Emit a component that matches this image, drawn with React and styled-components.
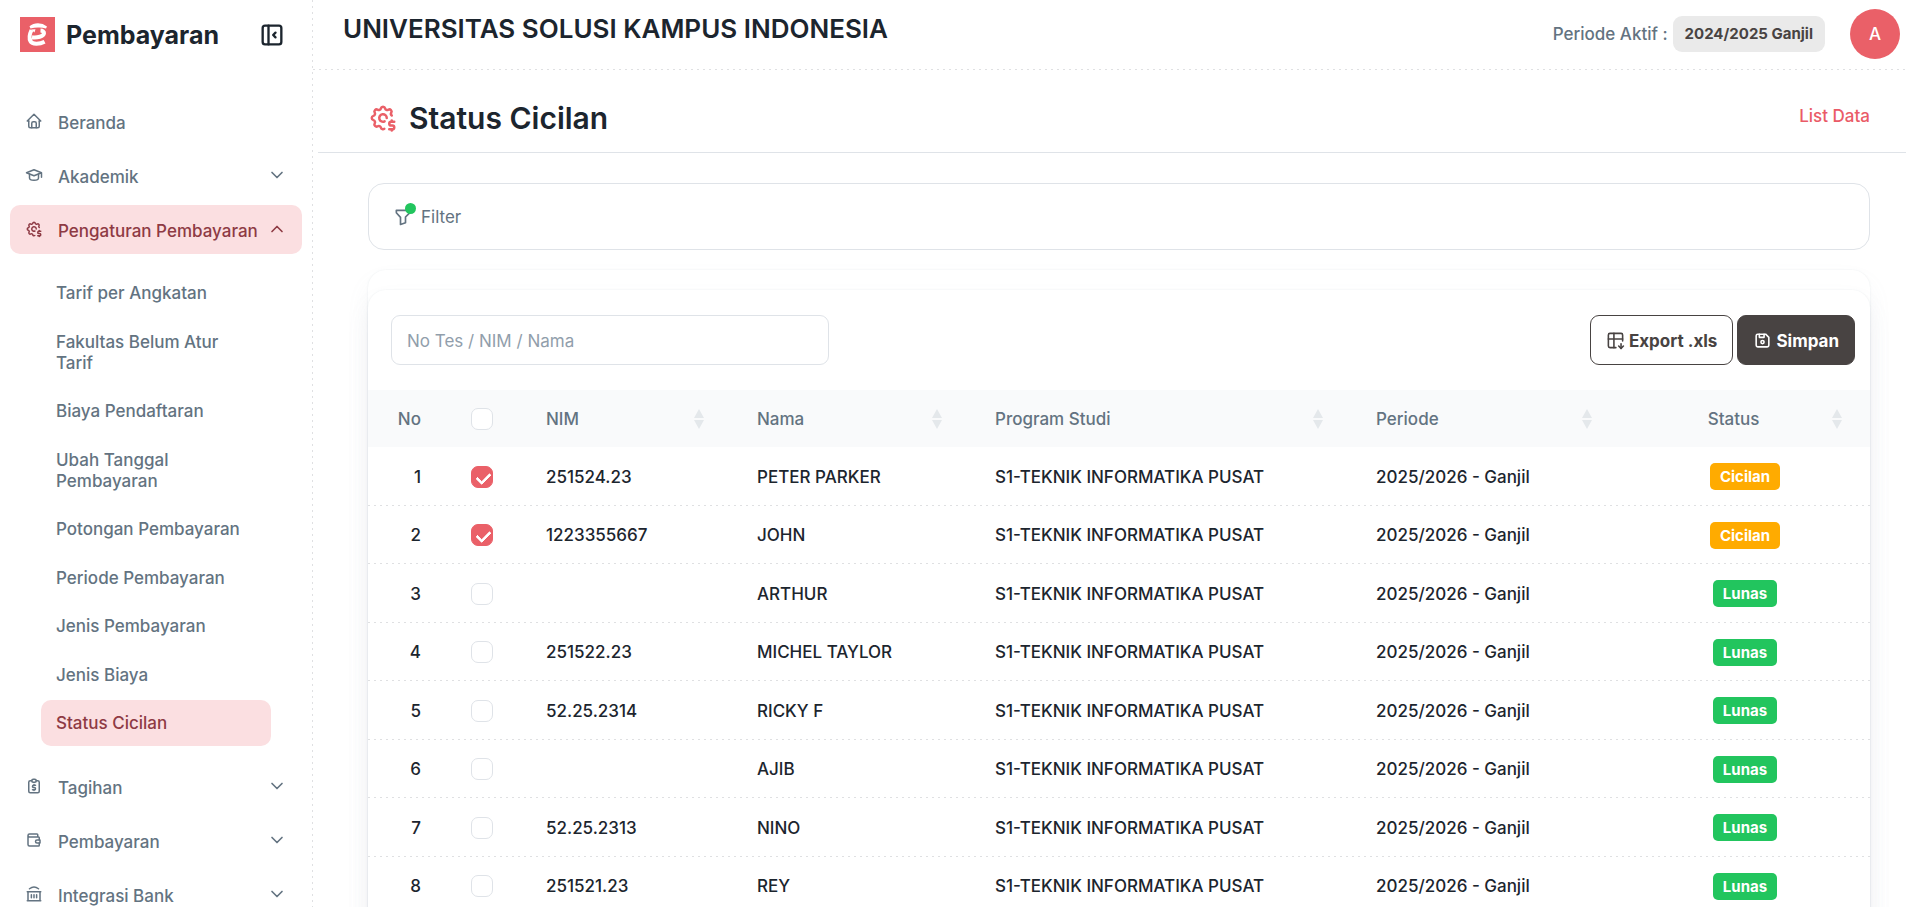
import { useState } from 'react';
import styled, { createGlobalStyle } from 'styled-components'
import {
  TbHome, TbSchool, TbSettingsDollar, TbWallet,
  TbLayoutSidebarLeftCollapse, TbFilter, TbTableDown, TbDeviceFloppy, TbChevronDown, TbChevronUp,
} from 'react-icons/tb'



const GlobalStyle = createGlobalStyle`
  * {
    box-sizing: border-box;
  }
  body {
    margin: 0;
    background: #ffffff;
    color: #1c252e;
    font-family: Inter, "Liberation Sans", sans-serif;
    font-size: 17px;
    font-weight: 500;
    overflow: hidden;
  }
  button, input {
    font-family: inherit;
    font-size: inherit;
  }
`;
const Page = styled.div`
  display: flex;
  flex-direction: row;
  height: 100vh;
`;
const Sidebar = styled.aside`
  width: 313px;
  flex-shrink: 0;
  padding: 0 11px 0 10px;
  background: repeating-linear-gradient(#dfe0e2 0 2px, transparent 2px 6px) right / 1px 100% no-repeat;
  overflow: hidden;
`;
const Brand = styled.div`
  display: flex;
  align-items: center;
  gap: 11px;
  height: 69px;
  padding: 0 16px 0 10px;
  margin-bottom: 28px;
  & h2 {
    margin: 0;
    flex: 1;
    font-size: 25px;
    font-weight: 700;
  }
`;
const IconButton = styled.button`
  display: flex;
  padding: 0;
  border: none;
  background: none;
  color: #1c252e;
  cursor: pointer;
  & svg {
    width: 28px;
    height: 28px;
  }
`;
const Menu = styled.ul`
  display: flex;
  flex-direction: column;
  gap: 5px;
  margin: 0;
  padding: 0;
  list-style: none;
`;
const MenuLink = styled.a`
  display: flex;
  align-items: center;
  height: 49px;
  padding: 2px 15px 0;
  border-radius: 10px;
  text-decoration: none;
  white-space: nowrap;
  color: ${(props) => (props.$active ? "#8e3a44" : "#637381")};
  background: ${(props) => (props.$active ? "#fbdfe1" : "transparent")};
  & span {
    flex: 1;
    margin-left: 15px;
  }
`;
const MenuIcon = styled.svg`
  width: 18px;
  height: 18px;
  flex-shrink: 0;
  margin-bottom: 4px;
`;
const Arrow = styled.svg`
  width: 20px;
  height: 20px;
  flex-shrink: 0;
  margin-bottom: 4px;
`;
const SubMenu = styled.ul`
  margin: 0;
  padding: 16px 31px 8px;
  list-style: none;
  & li {
    margin-bottom: 2px;
  }
  & li:nth-child(odd) {
    margin-bottom: 3px;
  }
`;
const SubLink = styled.a`
  display: block;
  padding: 13px 15px 12px;
  border-radius: 10px;
  line-height: 21px;
  text-decoration: none;
  color: ${(props) => (props.$active ? "#8e3a44" : "#637381")};
  background: ${(props) => (props.$active ? "#fbdfe1" : "transparent")};
`;

const Main = styled.div`
  flex: 1;
  min-width: 0;
`;
const TopBar = styled.header`
  display: flex;
  justify-content: space-between;
  height: 70px;
  padding: 0 6px 0 30px;
  background: repeating-linear-gradient(90deg, #dfe0e2 0 2px, transparent 2px 6px) bottom / 100% 1px no-repeat;
  & h1 {
    margin: 12px 0 0;
    font-size: 26px;
    line-height: 34px;
    font-weight: 600;
  }
`;
const TopRight = styled.div`
  display: flex;
  align-items: center;
  padding-bottom: 2px;
  color: #637381;
`;
const PeriodTag = styled.span`
  margin-left: 5px;
  padding: 0 12px;
  line-height: 36px;
  border-radius: 9px;
  background: #eaeaea;
  color: #484342;
  font-size: 15px;
  font-weight: 700;
`;
const Avatar = styled.button`
  width: 50px;
  height: 50px;
  margin-left: 25px;
  padding: 0;
  border: none;
  border-radius: 50%;
  background: #ea6068;
  color: #ffffff;
  font-weight: 500;
`;
const PageHead = styled.div`
  display: flex;
  align-items: center;
  height: 83px;
  margin-left: 5px;
  padding: 14px 36px 0 50px;
  border-bottom: 1px solid #dfe3e8;
  & svg {
    width: 30px;
    height: 30px;
    color: #ea6068;
  }
  & h2 {
    margin: 0 0 0 11px;
    flex: 1;
    font-size: 30px;
    font-weight: 600;
  }
  & a {
    padding-bottom: 4px;
    color: #ea5b67;
    text-decoration: none;
  }
`;
const Content = styled.main`
  padding: 30px 36px 0 55px;
`;
const FilterBox = styled.div`
  display: flex;
  align-items: center;
  height: 67px;
  padding: 0 24px;
  margin-bottom: 20px;
  border: 1px solid #dfe3e8;
  border-radius: 16px;
`;
const FilterButton = styled.button`
  position: relative;
  display: flex;
  align-items: center;
  gap: 8px;
  padding: 0;
  border: none;
  background: none;
  color: #637381;
  cursor: pointer;
  & svg {
    width: 20px;
    height: 20px;
  }
`;
const Dot = styled.i`
  position: absolute;
  top: -4px;
  left: 12px;
  width: 11px;
  height: 11px;
  border-radius: 50%;
  background: #22c55e;
`;
const Card = styled.section`
  background: #ffffff;
  border-radius: 18px;
  box-shadow: 0 0 2px rgba(145, 158, 171, 0.2), 0 13px 26px -4px rgba(145, 158, 171, 0.12);
`;
const OuterCard = styled(Card)`
  padding-top: 20px;
`;
const TableCard = styled(Card)`
  padding-bottom: 60px;
`;
const Toolbar = styled.div`
  display: flex;
  align-items: center;
  gap: 4px;
  padding: 25px 15px 25px 23px;
`;
const Search = styled.input`
  width: 438px;
  height: 50px;
  margin-right: auto;
  padding: 2px 15px 0;
  border: 1px solid #dfe3e8;
  border-radius: 9px;
  outline: none;
  color: #1c252e;
  &::placeholder {
    color: #919eab;
  }
`;
const ActionButton = styled.button`
  display: flex;
  align-items: center;
  gap: 4px;
  height: 50px;
  padding: 2px 15px 0;
  border: 1px solid #484342;
  border-radius: 9px;
  font-weight: 700;
  cursor: pointer;
  color: ${(props) => (props.$solid ? "#ffffff" : "#484342")};
  background: ${(props) => (props.$solid ? "#484342" : "#ffffff")};
  & svg {
    width: 19px;
    height: 19px;
    margin-bottom: 2px;
  }
`;
const Table = styled.table`
  width: 100%;
  table-layout: fixed;
  border-collapse: separate;
  border-spacing: 0;
  & thead tr {
    height: 57px;
    background: #f9fafb;
  }
  & tbody tr {
    height: 58px;
    background: repeating-linear-gradient(90deg, #dfe0e2 0 2px, transparent 2px 6px) bottom / 100% 1px no-repeat;
  }
  & tbody tr:nth-child(odd) {
    height: 59px;
  }
`;
const Col = styled.col`
  width: ${(props) => props.$width}px;
`;
const Th = styled.th`
  padding: 0 25px;
  font-weight: 500;
  color: #637381;
  text-align: ${(props) => props.$align || "left"};
`;
const ThInner = styled.div`
  display: flex;
  align-items: center;
  gap: 10px;
  margin-right: 3px;
  & span {
    flex: 1;
  }
`;
const Td = styled.td`
  padding: 0 25px;
  white-space: nowrap;
  text-align: ${(props) => props.$align || "left"};
`;
const SortIcon = styled.svg`
  width: 10px;
  height: 20px;
  fill: #e4e8eb;
`;
const CheckBox = styled.input`
  appearance: none;
  display: block;
  position: relative;
  width: 22px;
  height: 22px;
  margin: 0;
  border: 1px solid #dfe3e8;
  border-radius: 7px;
  background: #ffffff;
  cursor: pointer;
  &:checked {
    border-color: #ea6068;
    background: #ea6068;
  }
  &:checked::after {
    content: "";
    position: absolute;
    left: 7px;
    top: 3px;
    width: 6px;
    height: 11px;
    border: solid #ffffff;
    border-width: 0 3px 3px 0;
    border-radius: 1px;
    transform: rotate(45deg);
  }
`;
const StatusBadge = styled.span`
  display: inline-block;
  padding: 0 10px;
  border-radius: 5px;
  line-height: 27px;
  font-size: 15px;
  font-weight: 700;
  color: #ffffff;
  background: ${(props) => (props.$status === "Lunas" ? "#22c55e" : "#ffab00")};
`;

const Logo = () => (
  <svg width="35" height="35" viewBox="0 0 35 35" aria-hidden="true">
    <rect width="35" height="35" fill="#ea6068" />
    <path d="M9.500 9.200Q13 6.200 18 6.200T27 9.400L26 11.600Q22 10.400 18 10.600T10.500 11.400z" fill="#fff" />
    <path
      d="M11.500 13C9.600 17 9 21.500 10.500 24.300 12.200 27.600 19.500 27.400 24.600 24.800M12 20.300C17 21 23.800 19.500 24 16.200 24.100 14.600 22.500 13.600 20.500 13.500"
      fill="none" stroke="#fff" strokeWidth="4" strokeLinejoin="round"
    />
    <path d="M11 12.500 15.500 12.300 14.500 15.500z" fill="#fff" />
  </svg>
)

const LineIcon = ({ children, ...rest }) => (
  <svg viewBox="0 0 24 24" fill="none" stroke="currentColor" strokeWidth="2" strokeLinecap="round" strokeLinejoin="round" {...rest}>
    {children}
  </svg>
)

const InvoiceIcon = (props) => (
  <LineIcon {...props}>
    <path d="M9 5H7a2 2 0 0 0-2 2v12a2 2 0 0 0 2 2h10a2 2 0 0 0 2-2V7a2 2 0 0 0-2-2h-2" />
    <path d="M9 5a2 2 0 0 1 2-2h2a2 2 0 0 1 2 2 2 2 0 0 1-2 2h-2a2 2 0 0 1-2-2z" />
    <path d="M14 11h-2.500a1.500 1.500 0 0 0 0 3h1a1.500 1.500 0 0 1 0 3H10M12 10v1M12 17v1" />
  </LineIcon>
)

const BankIcon = (props) => (
  <LineIcon {...props}>
    <path d="M3 21h18M3 9h18M4 9v12M20 9v12M8.500 13v4M12 13v4M15.500 13v4M6 5c4-3 8-3 12 0" />
  </LineIcon>
)

const menus = [
  { label: 'Beranda', icon: TbHome },
  { label: 'Akademik', icon: TbSchool, hasChild: true },
  {
    label: 'Pengaturan Pembayaran',
    icon: TbSettingsDollar,
    hasChild: true,
    active: true,
    items: [
      'Tarif per Angkatan', 'Fakultas Belum Atur Tarif', 'Biaya Pendaftaran', 'Ubah Tanggal Pembayaran',
      'Potongan Pembayaran', 'Periode Pembayaran', 'Jenis Pembayaran', 'Jenis Biaya', 'Status Cicilan',
    ],
  },
  { label: 'Tagihan', icon: InvoiceIcon, hasChild: true },
  { label: 'Pembayaran', icon: TbWallet, hasChild: true },
  { label: 'Integrasi Bank', icon: BankIcon, hasChild: true },
]

const students = [
  { nim: '251524.23', nama: 'PETER PARKER', status: 'Cicilan' },
  { nim: '1223355667', nama: 'JOHN', status: 'Cicilan' },
  { nim: '', nama: 'ARTHUR', status: 'Lunas' },
  { nim: '251522.23', nama: 'MICHEL TAYLOR', status: 'Lunas' },
  { nim: '52.25.2314', nama: 'RICKY F', status: 'Lunas' },
  { nim: '', nama: 'AJIB', status: 'Lunas' },
  { nim: '52.25.2313', nama: 'NINO', status: 'Lunas' },
  { nim: '251521.23', nama: 'REY', status: 'Lunas' },
]

const widths = [78, 75, 211, 238, 381, 269, 250]

const SortHeader = (props) => (
  <Th $align={props.align}>
    <ThInner>
      <span>{props.children}</span>
      <SortIcon viewBox="0 0 10 20" aria-hidden="true">
        <path d="M5 0l5 9H0zM5 20l5-9H0z" />
      </SortIcon>
    </ThInner>
  </Th>
)

const SidebarView = () => (
  <Sidebar>
    <Brand>
      <Logo />
      <h2>Pembayaran</h2>
      <IconButton aria-label="Tutup menu"><TbLayoutSidebarLeftCollapse /></IconButton>
    </Brand>
    <nav>
      <Menu>
        {menus.map((menu) => (
          <li key={menu.label}>
            <MenuLink href="#" $active={menu.active}>
              <MenuIcon as={menu.icon} />
              <span>{menu.label}</span>
              {menu.hasChild && <Arrow as={menu.active ? TbChevronUp : TbChevronDown} />}
            </MenuLink>
            {menu.items && (
              <SubMenu>
                {menu.items.map((item) => (
                  <li key={item}><SubLink href="#" $active={item === 'Status Cicilan'}>{item}</SubLink></li>
                ))}
              </SubMenu>
            )}
          </li>
        ))}
      </Menu>
    </nav>
  </Sidebar>
)

const StatusTable = () => {
  const [checked, setChecked] = useState([0, 1]);

  const toggle = (index) => {
    setChecked(checked.includes(index) ? checked.filter((i) => i !== index) : [...checked, index])
  }

  return (
    <Table>
      <colgroup>
        {widths.map((width, index) => <Col key={index} $width={width} />)}
      </colgroup>
      <thead>
        <tr>
          <Th $align="right">No</Th>
          <Th>
            <CheckBox
              type="checkbox"
              aria-label="Pilih semua"
              checked={checked.length === students.length}
              onChange={(event) => setChecked(event.target.checked ? students.map((s, i) => i) : [])}
            />
          </Th>
          <SortHeader>NIM</SortHeader>
          <SortHeader>Nama</SortHeader>
          <SortHeader>Program Studi</SortHeader>
          <SortHeader>Periode</SortHeader>
          <SortHeader align="center">Status</SortHeader>
        </tr>
      </thead>
      <tbody>
        {students.map((student, index) => (
          <tr key={student.nama}>
            <Td $align="right">{index + 1}</Td>
            <Td>
              <CheckBox type="checkbox" aria-label={student.nama} checked={checked.includes(index)} onChange={() => toggle(index)} />
            </Td>
            <Td>{student.nim}</Td>
            <Td>{student.nama}</Td>
            <Td>S1-TEKNIK INFORMATIKA PUSAT</Td>
            <Td>2025/2026 - Ganjil</Td>
            <Td $align="center"><StatusBadge $status={student.status}>{student.status}</StatusBadge></Td>
          </tr>
        ))}
      </tbody>
    </Table>
  )
}

const App = () => {
  const [keyword, setKeyword] = useState('');

  return (
    <Page>
      <GlobalStyle />
      <SidebarView />
      <Main>
        <TopBar>
          <h1>UNIVERSITAS SOLUSI KAMPUS INDONESIA</h1>
          <TopRight>
            Periode Aktif :<PeriodTag>2024/2025 Ganjil</PeriodTag>
            <Avatar>A</Avatar>
          </TopRight>
        </TopBar>
        <PageHead>
          <TbSettingsDollar />
          <h2>Status Cicilan</h2>
          <a href="#">List Data</a>
        </PageHead>
        <Content>
          <FilterBox>
            <FilterButton><TbFilter />Filter<Dot /></FilterButton>
          </FilterBox>
          <OuterCard>
            <TableCard>
              <Toolbar>
                <Search
                  aria-label="Cari mahasiswa"
                  placeholder="No Tes / NIM / Nama"
                  value={keyword}
                  onChange={(event) => { setKeyword(event.target.value) }}
                />
                <ActionButton><TbTableDown />Export .xls</ActionButton>
                <ActionButton $solid><TbDeviceFloppy />Simpan</ActionButton>
              </Toolbar>
              <StatusTable />
            </TableCard>
          </OuterCard>
        </Content>
      </Main>
    </Page>
  )
}


export default App
